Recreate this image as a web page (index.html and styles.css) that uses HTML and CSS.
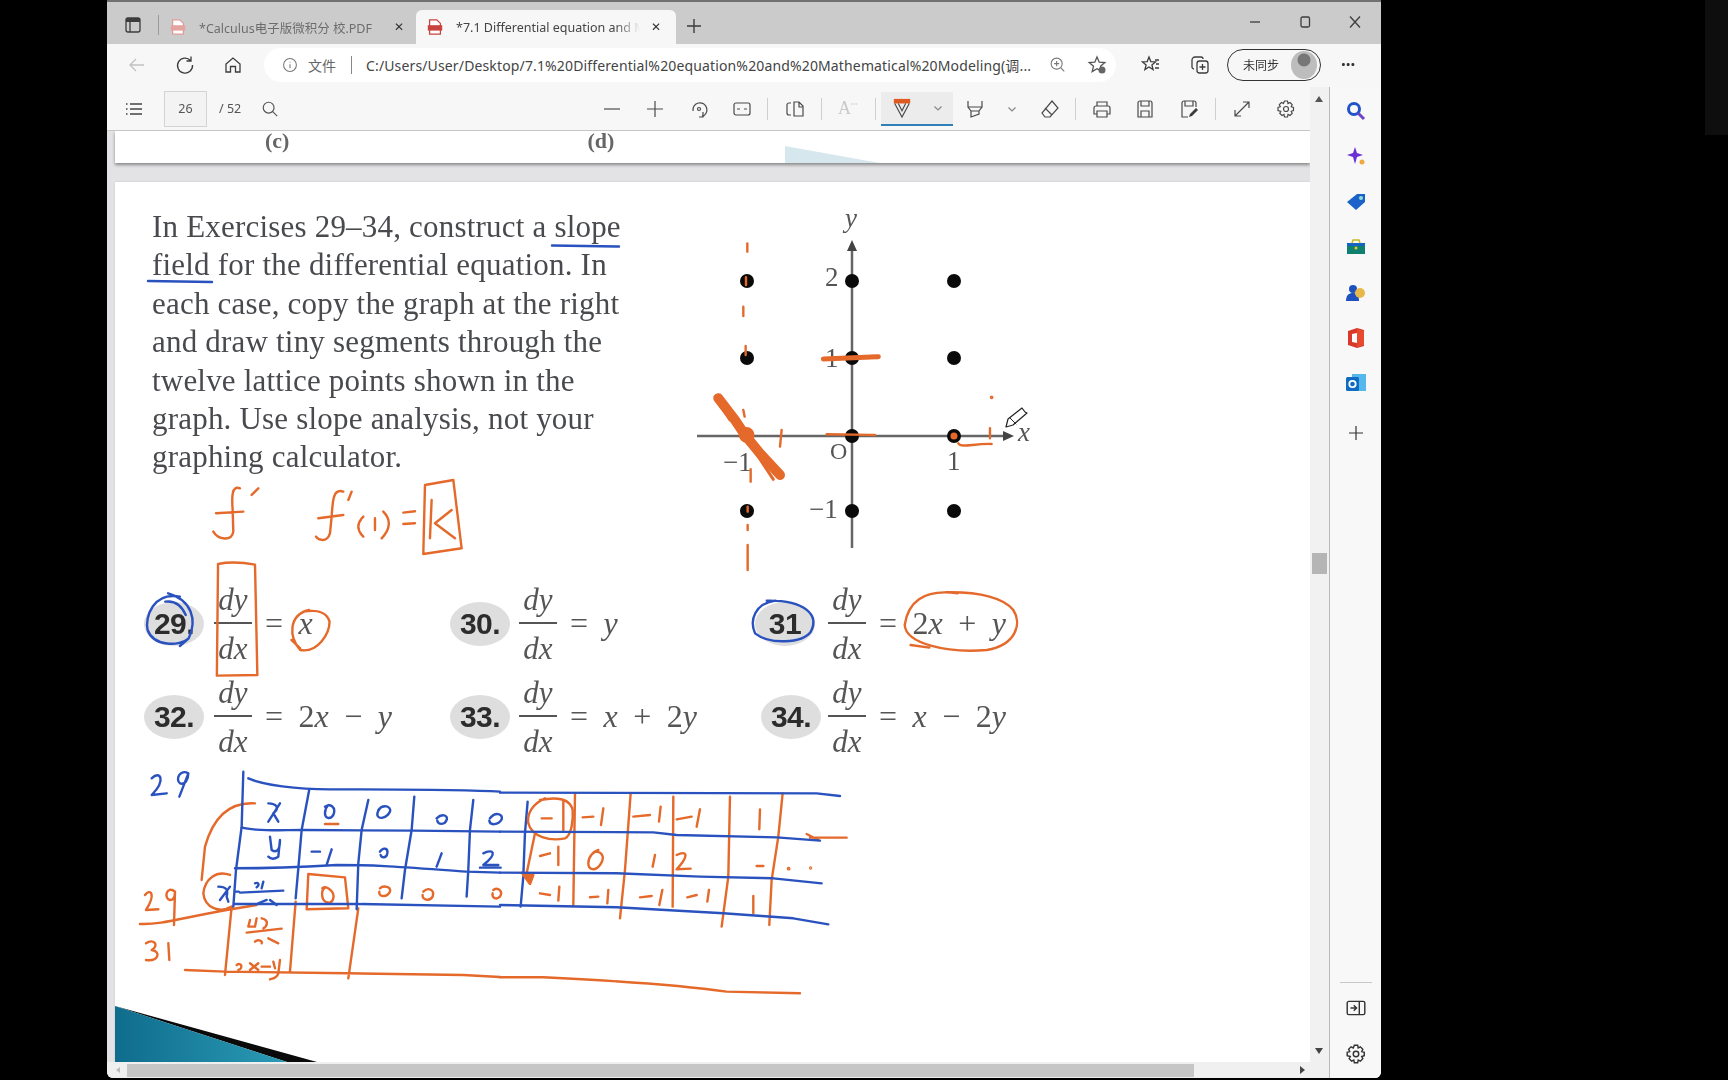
FILE: index.html
```html
<!DOCTYPE html>
<html lang="zh">
<head>
<meta charset="utf-8">
<title>7.1 Differential equation and Mathematical Modeling</title>
<link rel="stylesheet" href="styles.css">
</head>
<body>
<div class="corner"></div>
<div class="window">
  <header class="titlebar">
    <svg class="ic tabview" viewBox="0 0 20 20"><rect x="3" y="3" width="14" height="14" rx="2"/><path class="fill" d="M3 3h14v4H3z"/><path d="M7 7v10"/></svg>
    <span class="tsep"></span>
    <div class="tab">
      <svg class="pdf faded" viewBox="0 0 20 20"><path d="M4 2h8l4 4v12H4z"/><rect class="band" x="2" y="8" width="16" height="6"/></svg>
      <span class="tabtext t1">*Calculus电子版微积分 校.PDF</span>
      <span class="tabx">✕</span>
    </div>
    <div class="tab active">
      <svg class="pdf" viewBox="0 0 20 20"><path d="M4 2h8l4 4v12H4z"/><rect class="band" x="2" y="8" width="16" height="6"/></svg>
      <span class="tabtext t2">*7.1 Differential equation and M</span>
      <span class="tabx">✕</span>
    </div>
    <svg class="ic newtab" viewBox="0 0 20 20"><path d="M10 3v14M3 10h14"/></svg>
    <div class="winctl">
      <svg class="ic wbtn" viewBox="0 0 20 20"><path d="M5 10h10"/></svg>
      <svg class="ic wbtn" viewBox="0 0 20 20"><rect x="6" y="5" width="8.5" height="10" rx="1.5"/></svg>
      <svg class="ic wbtn" viewBox="0 0 20 20"><path d="M5 4.5l10 11M15 4.5l-10 11"/></svg>
    </div>
  </header>

  <nav class="addrbar">
    <svg class="ic nav dim" viewBox="0 0 20 20"><path d="M17 10H3M9 4l-6 6 6 6"/></svg>
    <svg class="ic nav" viewBox="0 0 20 20"><path d="M15.5 5.5A7.5 7.5 0 1 0 17.5 10M16 1.5v4.5h-4.5"/></svg>
    <svg class="ic nav" viewBox="0 0 20 20"><path d="M3 9l7-6 7 6v8h-4.5v-5.5h-5V17H3z"/></svg>
    <div class="omnibox">
      <svg class="ic info" viewBox="0 0 20 20"><circle cx="10" cy="10" r="8"/><path d="M10 9v5M10 6v1"/></svg>
      <span class="filelabel">文件</span>
      <span class="omsep"></span>
      <span class="url">C:/Users/User/Desktop/7.1%20Differential%20equation%20and%20Mathematical%20Modeling(调...</span>
      <svg class="ic zoomi" viewBox="0 0 20 20"><circle cx="9" cy="9" r="6.5"/><path d="M14 14l4 4M6 9h6M9 6v6"/></svg>
      <svg class="ic fav" viewBox="0 0 20 20"><path d="M10 2l2.2 5.2 5.6.4-4.3 3.6 1.3 5.4L10 13.7 5.2 16.6l1.3-5.4L2.200 7.600l5.600-.4z"/><circle class="fill" cx="15" cy="15" r="3.500"/></svg>
    </div>
    <svg class="ic favs" viewBox="0 0 20 20"><path d="M8 2l1.800 4.600 4.700.3-3.600 3 1.200 4.600L8 12l-4.100 2.500 1.200-4.600-3.600-3 4.700-.3zM14 5h4M15 9h3M14 13h4"/></svg>
    <svg class="ic coll" viewBox="0 0 20 20"><rect x="7" y="6" width="11" height="12" rx="2.500"/><path d="M4 14a2 2 0 0 1-2-2V5a3 3 0 0 1 3-3h6a2 2 0 0 1 2 2M12.500 9v6M9.500 12h6"/></svg>
    <div class="sync"><span class="synctext">未同步</span><span class="avatar"></span></div>
    <span class="more">···</span>
  </nav>

  <div class="viewer">
    <div class="docarea">
      <div class="toolbar">
        <svg class="ic list" viewBox="0 0 20 20"><path d="M6 5h12M6 10h12M6 15h12M2 5h1.500M2 10h1.500M2 15h1.500"/></svg>
        <span class="pagebox">26</span>
        <span class="pagetotal">/ 52</span>
        <svg class="ic find" viewBox="0 0 20 20"><circle cx="8.500" cy="8.500" r="6"/><path d="M13 13l5 5"/></svg>
        <div class="tools">
          <span class="t w43"><svg class="ic" viewBox="0 0 20 20"><path d="M2 10h16"/></svg></span>
          <span class="t w43"><svg class="ic" viewBox="0 0 20 20"><path d="M2 10h16M10 2v16"/></svg></span>
          <span class="t w43"><svg class="ic" viewBox="0 0 20 20"><path d="M4 12a7 7 0 1 1 9 5.500M14 13v5h-4"/><circle cx="10" cy="10" r="1.500"/></svg></span>
          <span class="t w43"><svg class="ic" viewBox="0 0 20 20"><rect x="2" y="4" width="16" height="12" rx="2"/><path d="M5 10h3M12 10h3"/></svg></span>
          <span class="vsep s-a"></span>
          <span class="t w48"><svg class="ic" viewBox="0 0 20 20"><path d="M6 4H4a2 2 0 0 0-2 2v8a2 2 0 0 0 2 2h2M9 3v14h9V7l-4-4zM14 3v5h4"/></svg></span>
          <span class="vsep s-b"></span>
          <span class="t w48 faint"><span class="readaloud">A<sup>ꟷ</sup></span></span>
          <span class="vsep s-c"></span>
          <span class="drawbtn">
            <svg class="drawicon" viewBox="0 0 22 24"><path class="orange" d="M2 2h18v5H2z"/><path d="M3 7l8 15 8-15M7 7l4 8 4-8"/></svg>
            <svg class="chev" viewBox="0 0 12 12"><path d="M2.500 4.500L6 8l3.500-3.500"/></svg>
          </span>
          <span class="t w44"><svg class="ic" viewBox="0 0 20 20"><path d="M3 2v6l3 4h8l3-4V2M3 8h14M6 12v6l8-3v-3"/></svg></span>
          <span class="t w30"><svg class="chev" viewBox="0 0 12 12"><path d="M2.500 4.500L6 8l3.500-3.500"/></svg></span>
          <span class="t w46"><svg class="ic" viewBox="0 0 20 20"><path d="M12 2l6 7-8 9H5l-3-4zM5 9l7 7"/></svg></span>
          <span class="vsep s-d"></span>
          <span class="t w48"><svg class="ic" viewBox="0 0 20 20"><path d="M5 7V3h10v4M5 15H2V9a2 2 0 0 1 2-2h12a2 2 0 0 1 2 2v6h-3M5 12h10v6H5z"/></svg></span>
          <span class="t w38"><svg class="ic" viewBox="0 0 20 20"><path d="M3 4a2 2 0 0 1 2-2h10a2 2 0 0 1 2 2v14H3zM6 2v5h8V2M6 18v-6h8v6"/></svg></span>
          <span class="t w50"><svg class="ic" viewBox="0 0 20 20"><path d="M9 18H3V4a2 2 0 0 1 2-2h10a2 2 0 0 1 2 2v4M6 2v5h8V2"/><path class="fill" d="M10 18l1-3 6-6 2 2-6 6z"/></svg></span>
          <span class="vsep s-e"></span>
          <span class="t w50"><svg class="ic" viewBox="0 0 20 20"><path d="M3 17L17 3M11 3h6v6M3 11v6h6"/></svg></span>
          <span class="t w38"><svg class="ic" viewBox="0 0 20 20"><path d="M8.500 2h3l.5 2.500 2-1 2.200 2.200-1 2 2.300.8v3l-2.300.8 1 2-2.200 2.200-2-1-.5 2.500h-3l-.5-2.500-2 1-2.200-2.200 1-2L2 11.500v-3l2.300-.8-1-2L5.500 3.500l2 1z"/><circle cx="10" cy="10" r="2.500"/></svg></span>
        </div>
      </div>

      <div class="pages">
        <section class="page prev">
          <span class="cap cap-c">(c)</span>
          <span class="cap cap-d">(d)</span>
          <span class="prevshape"></span>
        </section>
        <section class="page current">
          <div class="intro">
            <p class="prose">In Exercises 29–34, construct a slope field for the differential equation. In each case, copy the graph at the right and draw tiny segments through the twelve lattice points shown in the graph. Use slope analysis, not your graphing calculator.</p>
            <svg class="graph" viewBox="680 200 360 370">
              <g class="axes">
                <path d="M852 548V248M697 436H1004"/>
                <path class="arrow" d="M852 240l-5 11h10zM1014 436l-11-5v10z"/>
              </g>
              <g class="dots">
                <circle cx="747" cy="281" r="7"/><circle cx="852" cy="281" r="7"/><circle cx="954" cy="281" r="7"/>
                <circle cx="747" cy="358" r="7"/><circle cx="852" cy="358" r="7"/><circle cx="954" cy="358" r="7"/>
                <circle cx="852" cy="436" r="7"/><circle cx="954" cy="436" r="7"/>
                <circle cx="747" cy="511" r="7"/><circle cx="852" cy="511" r="7"/><circle cx="954" cy="511" r="7"/>
              </g>
              <text class="glabel it" x="845" y="227">y</text>
              <text class="glabel" x="825" y="286">2</text>
              <text class="glabel" x="825" y="367">1</text>
              <text class="glabel small" x="830" y="459">O</text>
              <text class="glabel" x="947" y="470">1</text>
              <text class="glabel" x="723" y="471">−1</text>
              <text class="glabel" x="809" y="518">−1</text>
              <text class="glabel it" x="1018" y="441">x</text>
            </svg>
          </div>

          <div class="exercises">
            <div class="ex c1"><span class="num">29.</span><span class="frac"><span class="top">dy</span><span class="bot">dx</span></span><span class="rhs">= <i>x</i></span></div>
            <div class="ex c2"><span class="num">30.</span><span class="frac"><span class="top">dy</span><span class="bot">dx</span></span><span class="rhs">= <i>y</i></span></div>
            <div class="ex c3"><span class="num">31</span><span class="frac"><span class="top">dy</span><span class="bot">dx</span></span><span class="rhs">= 2<i>x</i> + <i>y</i></span></div>
            <div class="ex c1"><span class="num">32.</span><span class="frac"><span class="top">dy</span><span class="bot">dx</span></span><span class="rhs">= 2<i>x</i> − <i>y</i></span></div>
            <div class="ex c2"><span class="num">33.</span><span class="frac"><span class="top">dy</span><span class="bot">dx</span></span><span class="rhs">= <i>x</i> + 2<i>y</i></span></div>
            <div class="ex c3 shifted"><span class="num">34.</span><span class="frac"><span class="top">dy</span><span class="bot">dx</span></span><span class="rhs">= <i>x</i> − 2<i>y</i></span></div>
          </div>

          <svg class="corner-art" viewBox="0 0 202 56" preserveAspectRatio="none">
            <defs><linearGradient id="teal" x1="0" x2="1" y1="0" y2="0"><stop offset="0" stop-color="#0f6c8c"/><stop offset="1" stop-color="#2a9bb6"/></linearGradient></defs>
            <path d="M0 0L202 56H172Z" fill="#0a0a0a"/>
            <path d="M0 0L172 56H0Z" fill="url(#teal)"/>
          </svg>
        </section>

        <svg class="ink" viewBox="107 131 1204 931">
          <g class="blue">
            <path d="M552 245.500L619 246.500M148 281L212 282"/>
          </g>
          <g class="orange" transform="translate(130 190) scale(.3333)">
            <path d="M330 895C305 885 305 920 308 960L310 1025C305 1055 265 1050 250 1025M258 970L340 965M385 895L365 915"/>
            <path d="M640 905C610 895 608 930 605 980L600 1030C590 1060 565 1050 558 1040M565 985L640 975M665 905L655 930"/>
            <path d="M700 980C680 1000 680 1020 700 1040M735 985L735 1020M760 965C785 990 780 1020 755 1045M820 968L855 964M820 1002L855 1000"/>
            <path d="M885 885L970 870L995 1075L880 1092Z M905 930L900 1045M965 960L915 1000L975 1045"/>
          </g>
          <g class="orange" transform="translate(680 190) scale(.3333)">
            <path d="M202 160V185M190 350V378M198 262V285M197 468V495M203 950V965M203 1005V1020M203 1065V1140M212 838V875M190 660L194 680M305 720L300 770M930 715V745"/>
            <path d="M835 760C845 775 880 760 935 762M440 733L585 735"/>
            <path class="thick" d="M115 625L165 690L195 735L240 790L300 855"/>
            <path class="thick-edge" d="M105 620L150 690M225 785L280 868"/>
            <path class="thick2" d="M430 507L595 500"/>
            <circle class="fill" cx="822" cy="738" r="7"/>
            <circle class="fill" cx="200" cy="735" r="20"/>
            <circle class="fill" cx="935" cy="622" r="2"/>
          </g>
          <g transform="translate(130 560) scale(.5869 .3333)">
            <g class="blue">
              <path d="M85 110C40 95 25 170 30 210C40 260 85 260 100 235C115 180 105 120 65 100M60 125C80 120 90 145 95 165M100 235L85 258"/>
              <path d="M1100 122C1065 130 1055 180 1065 220C1090 255 1145 250 1160 215C1175 165 1150 120 1085 122"/>
            </g>
            <g class="orange">
              <path d="M150 12C170 5 195 8 213 14L217 345L148 347Z"/>
              <path d="M305 150C270 165 270 230 290 270C320 280 340 220 340 185C335 155 320 148 295 155M275 240L290 265"/>
              <path d="M1410 100C1350 85 1325 130 1320 195C1322 250 1390 280 1460 270C1510 255 1520 190 1505 150C1490 115 1450 95 1390 97M1330 255L1362 263"/>
            </g>
          </g>
          <g class="orange" transform="translate(130 750) scale(.3333)">
            <path d="M375 160C300 155 250 200 225 290L215 390M300 375C260 360 225 385 220 430C225 475 270 490 305 470M30 522C90 525 150 505 290 480L380 465"/>
            <path d="M305 470L285 675M497 455L480 665M685 475L655 685M165 660L285 665L650 670L1000 675L1110 681"/>
            <path d="M45 435C60 415 80 430 48 480L85 478M135 425C110 405 100 445 120 450C135 450 135 430 135 425L132 525"/>
            <path d="M48 580C70 565 90 585 65 600C95 605 85 635 48 630M115 580L118 630"/>
            <path d="M360 510L355 530L375 530L380 505M395 505C420 510 410 530 400 535M350 548L455 536M375 575C385 565 400 575 395 580M415 565L445 580"/>
            <path d="M320 645C335 635 340 655 325 660M360 640L385 660M385 640L360 660M395 650H420M430 635L435 655M450 630L445 670C440 685 430 685 420 688"/>
            <path d="M535 372L645 382L655 475L530 478L535 372M577 415C590 405 615 425 610 445C605 465 580 460 577 440C575 425 577 420 585 412"/>
            <path d="M750 415C760 405 785 410 780 425C770 445 745 440 748 425M880 425C895 410 915 420 908 440C900 455 875 450 878 435M1090 420C1105 410 1120 425 1110 440C1100 450 1085 445 1088 430"/>
            <path d="M585 222H625"/>
          </g>
          <g class="blue" transform="translate(130 750) scale(.3333)">
            <path d="M340 65L335 230L318 360L310 470"/>
            <path d="M355 85C400 105 500 118 600 118C800 118 1000 118 1110 125"/>
            <path d="M335 232C380 245 450 240 520 240L850 242L1110 245"/>
            <path d="M315 355C400 355 500 352 620 345C750 345 800 350 1010 365L1110 368"/>
            <path d="M315 462L680 462L1110 470"/>
            <path d="M538 118L515 240L505 355L497 445M715 150L695 240L685 340L680 478M853 140L845 240L825 360L815 445M1030 150L1020 240L1015 360L1010 440M1193 155L1185 250L1180 380L1172 470"/>
            <path d="M65 85C90 60 110 90 65 135L110 130M175 70C150 55 135 90 150 100C165 105 175 90 175 70L148 140"/>
            <path d="M415 160C440 160 450 175 430 190L445 215M450 160L415 215"/>
            <path d="M420 260L425 300C440 310 450 300 450 270L445 320C430 330 420 325 415 320"/>
            <path d="M585 170C600 160 620 170 610 195C600 210 585 205 585 190C585 180 590 170 595 165M745 180C760 160 785 170 780 185C770 205 745 210 742 195C742 185 745 180 750 175M920 205C935 190 955 195 950 210C945 225 925 225 922 212M1080 205C1095 185 1120 190 1115 208C1105 225 1080 228 1078 212"/>
            <path d="M545 305H570M605 298L590 345M750 305C760 290 775 295 772 310C770 325 755 325 752 315M935 310L920 350"/>
            <path d="M1060 310C1090 295 1105 310 1060 345L1105 345M1050 353H1112"/>
            <path d="M265 410C290 410 295 420 290 440L295 455M300 410L270 450M318 425H326M330 428L460 422M375 400C385 395 390 405 380 412M400 395L395 415M385 460L410 450M420 450L440 465"/>
          </g>
          <g class="orange" transform="translate(500 770) scale(.3333)">
            <path d="M135 85C100 100 80 130 85 160C95 200 150 215 195 205C215 195 220 150 218 120C210 85 170 80 120 90M190 95V180M125 145H155"/>
            <path d="M105 190L80 310"/>
            <path class="fill" d="M65 308L100 315L90 342Z"/>
            <path d="M225 70L220 405M392 70L375 300L360 445M520 80L518 410M690 80L685 320L665 470M848 70L835 200L815 330L808 465"/>
            <path d="M248 142L280 140M310 115L303 165M400 140L450 135M482 110L477 155M530 148L575 140M600 118L590 170M780 118L778 178"/>
            <path d="M120 258L150 250M175 230V285M285 245C310 245 315 265 300 285C285 305 265 300 265 280C265 260 280 245 295 240M465 255L458 290M530 255C560 240 570 255 530 298L572 296M770 288H790"/>
            <path d="M120 370L150 375M178 350L175 392M270 382L295 380M325 360L322 400M420 382L455 378M487 360L478 405M562 382L590 375M627 360L622 395M760 378V430"/>
            <path d="M920 192L955 210M930 203H1040M0 622H130C300 630 500 640 680 665L900 670"/>
            <circle class="fill" cx="866" cy="296" r="2"/>
            <circle class="fill" cx="932" cy="294" r="1.500"/>
          </g>
          <g class="blue" transform="translate(500 770) scale(.3333)">
            <path d="M0 68L950 70L1020 78M0 185L460 187L530 195L830 202L960 212M0 308L350 310L600 320L820 325L965 340M0 405L350 412L670 430L880 445L985 463"/>
          </g>
          <path class="cursor" d="M1006 427L1008 419L1022 408L1025 412L1027 413L1013 425Z"/>
          <path class="cursor-line" d="M1010 418L1016 424"/>
        </svg>
      </div>
    </div>

    <div class="vscroll">
      <span class="arrow-up"></span>
      <span class="vthumb"></span>
      <span class="arrow-down"></span>
    </div>
    <div class="hscroll">
      <span class="hleft"></span>
      <span class="hthumb"></span>
      <span class="hright"></span>
    </div>
  </div>

  <aside class="sidebar">
    <svg class="side" viewBox="0 0 22 22"><circle cx="9" cy="9" r="5.500" fill="none" stroke="#2353c8" stroke-width="3"/><path d="M13 13l6 6" stroke="#6b46c8" stroke-width="3" fill="none"/></svg>
    <svg class="side" viewBox="0 0 22 22"><path d="M10 2l2 6 6 2-6 2-2 7-2-7-6-2 6-2z" fill="#6a2fd6"/><circle cx="17" cy="17" r="2.500" fill="#f0a840"/></svg>
    <svg class="side" viewBox="0 0 22 22"><path d="M2 11L12 3h8v8l-9 8z" fill="#1b63c9"/><circle cx="16" cy="7" r="2" fill="#8fe0d0"/></svg>
    <svg class="side" viewBox="0 0 22 22"><rect x="2" y="7" width="18" height="11" fill="#0f7f6e"/><path d="M2 7h18v3H2z" fill="#1464c0"/><path d="M7 7l1-3h6l1 3" fill="none" stroke="#c8b820" stroke-width="1.500"/><circle cx="11" cy="12" r="1.500" fill="#e8c830"/></svg>
    <svg class="side" viewBox="0 0 22 22"><circle cx="8" cy="7" r="4" fill="#1e50c0"/><path d="M1 19c0-6 3-8 7-8s6 2 6 8z" fill="#1e50c0"/><circle cx="15" cy="11" r="5" fill="#e8b94a"/></svg>
    <svg class="side" viewBox="0 0 22 22"><path d="M3 4l9-3 7 2v16l-7 2-9-3z" fill="#d8392b"/><path d="M7 7l5-1v10l-5-1z" fill="#fff"/><path d="M12 2v18l7-2V4z" fill="#e84a2f"/></svg>
    <svg class="side" viewBox="0 0 22 22"><rect x="7" y="2" width="14" height="17" fill="#55b8ec"/><rect x="1" y="5" width="13" height="14" rx="1.500" fill="#0f6cc0"/><circle cx="7.500" cy="12" r="3.200" fill="none" stroke="#fff" stroke-width="1.800"/></svg>
    <svg class="side plus" viewBox="0 0 22 22"><path d="M11 4v14M4 11h14" stroke="#333" stroke-width="1.200" fill="none"/></svg>
    <div class="sidefoot">
      <span class="sidesep"></span>
      <svg class="ic sideic" viewBox="0 0 20 20"><rect x="2" y="4" width="16" height="12" rx="1.500"/><path d="M13 4v12M5 10h5M8 7.500l2.500 2.500L8 12.500"/></svg>
      <svg class="ic sideic gearic" viewBox="0 0 20 20"><path d="M8.500 2h3l.5 2.500 2-1 2.200 2.200-1 2 2.300.8v3l-2.300.8 1 2-2.200 2.200-2-1-.5 2.500h-3l-.5-2.500-2 1-2.200-2.200 1-2L2 11.500v-3l2.300-.8-1-2L5.500 3.500l2 1z"/><circle cx="10" cy="10" r="2.500"/></svg>
    </div>
  </aside>
</div>
</body>
</html>
```
FILE: styles.css
```css
* { box-sizing: border-box; }
html, body { margin: 0; height: 100%; }
body { background: #000; overflow: hidden; font-family: "Noto Sans", "Noto Sans CJK SC", sans-serif; color: #333; }
.corner { position: absolute; top: 0; right: 0; width: 23px; height: 135px; background: #0e0e0e; }

.window {
  position: relative;
  margin-left: 107px; width: 1274px; height: 1078px;
  display: grid;
  grid-template-columns: 1fr 51px;
  grid-template-rows: 44px 43px 1fr;
  grid-template-areas: "title title" "addr addr" "viewer side";
  background: #f7f7f7;
  border-radius: 0 0 6px 6px;
  overflow: hidden;
  filter: blur(.55px);
}
.ic { width: 20px; height: 20px; flex: none; fill: none; stroke: #3c3c3c; stroke-width: 1.3; }
.ic .fill { fill: #3c3c3c; stroke: none; }

/* title bar */
.titlebar { grid-area: title; display: flex; align-items: flex-end; background: #cbcbcb; border-top: 2px solid #707070; padding-left: 16px; position: relative; }
.tabview { align-self: center; margin-top: 3px; }
.tsep { align-self: center; width: 1px; height: 20px; background: #9a9a9a; margin: 3px 4px 0 15px; }
.tab { display: flex; align-items: center; width: 253px; height: 34px; padding-left: 6px; font-size: 12.5px; color: #555; }
.tab.active { width: 260px; padding-left: 10px; background: #f7f7f7; border-radius: 6px 6px 0 0; color: #444; }
.pdf { width: 18px; height: 20px; flex: none; fill: #fff; stroke: #c9433e; stroke-width: 1.4; }
.pdf .band { fill: #c9433e; stroke: none; }
.pdf.faded { stroke: #dd9a98; }
.pdf.faded .band { fill: #e3a3a0; }
.tabtext { white-space: nowrap; margin-left: 12px; }
.t1 { width: 180px; opacity: .8; }
.t2 { width: 190px; flex: none; -webkit-mask-image: linear-gradient(90deg, #000 84%, transparent 97%); mask-image: linear-gradient(90deg, #000 84%, transparent 97%); }
.tabx { font-size: 12px; font-weight: 700; color: #333; margin-left: 14px; width: 16px; text-align: center; font-family: "DejaVu Sans", sans-serif; }
.t1 + .tabx { margin-left: 12px; }
.t2 + .tabx { margin-left: 2px; }
.newtab { align-self: center; margin: 5px 0 0 8px; stroke-width: 1.400; }
.winctl { margin-left: auto; display: flex; align-self: flex-start; height: 40px; align-items: center; padding-right: 1px; }
.wbtn { width: 50px; height: 20px; }

/* address bar */
.addrbar { grid-area: addr; display: flex; align-items: center; padding: 0 0 2px 6px; background: #f7f7f7; }
.nav { width: 48px; height: 20px; stroke-width: 1.300; }
.nav.dim { stroke: #c2c2c2; }
.omnibox { display: flex; align-items: center; margin-left: 7px; width: 852px; height: 34px; background: #fff; border-radius: 17px; padding-left: 18px; font-size: 14px; color: #444; }
.info { width: 16px; height: 16px; stroke: #777; }
.filelabel { margin-left: 10px; width: 31px; white-space: nowrap; font-size: 14px; color: #666; }
.omsep { width: 1px; height: 18px; background: #888; margin: 0 14px 0 12px; }
.url { white-space: nowrap; font-size: 14px; letter-spacing: .14px; width: 668px; flex: none; }
.zoomi { width: 17px; height: 17px; margin-left: 15px; stroke: #777; }
.fav { width: 20px; margin-left: 21px; stroke: #555; }
.fav .fill { fill: #666; }
.favs { margin-left: 25px; }
.coll { margin-left: 29px; }
.sync { display: flex; align-items: center; margin-left: 17px; width: 94px; height: 32px; border: 1.500px solid #333; border-radius: 16px; padding-left: 15px; font-size: 12px; color: #333; }
.synctext { width: 48px; }
.avatar { width: 26px; height: 28px; border-radius: 50%; background: radial-gradient(circle at 50% 32%, #777 0 26%, #bdbdbd 30% 100%); }
.more { margin-left: 20px; font-size: 17px; font-weight: 700; color: #333; letter-spacing: 0; }

/* viewer */
.viewer { grid-area: viewer; display: grid; grid-template-columns: 1fr 19px; grid-template-rows: 1fr 16px; border-right: 1px solid #b9b9b9; min-height: 0; min-width: 0; }
.docarea { display: flex; flex-direction: column; min-height: 0; min-width: 0; }
.toolbar { height: 44px; flex: none; display: flex; align-items: center; padding-left: 17px; padding-right: 5px; background: #f7f7f7; border-bottom: 1px solid #c6c6c6; font-size: 12.5px; color: #555; }
.list { stroke: #444; }
.pagebox { margin-left: 20px; width: 43px; height: 36px; display: flex; align-items: center; justify-content: center; background: #f3f3f3; border: 1px solid #d4d4d4; color: #555; }
.pagetotal { margin-left: 12px; }
.find { margin-left: 20px; width: 18px; height: 18px; stroke: #555; }
.tools { margin-left: auto; display: flex; align-items: center; }
.t { display: flex; justify-content: center; align-items: center; height: 34px; }
.t .ic { stroke: #4a4a4a; stroke-width: 1.200; }
.w30 { width: 30px; } .w38 { width: 38px; } .w43 { width: 43.5px; } .w44 { width: 44px; } .w46 { width: 46px; } .w48 { width: 48px; } .w50 { width: 50px; }
.vsep { width: 1px; height: 22px; background: #cfcfcf; }
.s-a { margin: 0 3px; } .s-b { margin: 0 2px; } .s-c { margin: 0 5px 0 3px; } .s-d { margin: 0 2px; } .s-e { margin: 0 1px; }
.faint { color: #c9c9c9; font-family: "Liberation Serif", serif; font-size: 18px; }
.readaloud sup { font-size: 8px; }
.drawbtn { display: flex; align-items: center; width: 72px; height: 34px; background: #ececec; border-bottom: 2px solid #2f7fb8; padding-left: 11px; }
.drawicon { width: 20px; height: 22px; fill: none; stroke: #444; stroke-width: 1.200; }
.drawicon .orange { fill: #df5a1f; stroke: none; }
.chev { width: 12px; height: 12px; fill: none; stroke: #888; stroke-width: 1.200; }
.drawbtn .chev { margin-left: 20px; }

/* pdf pages */
.pages { position: relative; flex: 1; min-height: 0; overflow: hidden; background: #e3e3e5; padding-left: 8px; font-family: "Liberation Serif", serif; }
.page { background: #fff; position: relative; }
.prev { height: 32px; box-shadow: 0 2px 3px rgba(0,0,0,.4); display: flex; margin-bottom: 19px; }
.cap { font-size: 22px; line-height: 20px; color: #666; font-weight: 700; }
.cap-c { margin-left: 150px; }
.cap-d { margin-left: 298px; }
.prevshape { position: absolute; left: 670px; top: 15px; width: 95px; height: 17px; background: #d6e7ee; clip-path: polygon(0 0, 100% 100%, 0 100%); }
.current { height: 880px; padding: 18px 0 0 37px; box-shadow: 0 0 2px rgba(0,0,0,.12); }
.intro { display: flex; height: 370px; }
.prose { margin: 8px 0 0; width: 480px; font-size: 31px; letter-spacing: .2px; line-height: 38.400px; color: #484a4e; flex: none; }
.graph { width: 360px; height: 370px; flex: none; margin-left: 48px; font-family: "Liberation Serif", serif; }
.axes path { fill: none; stroke: #666; stroke-width: 2.500; }
.axes .arrow { fill: #444; stroke: none; }
.dots circle { fill: #0a0a0a; }
.glabel { font-size: 27px; fill: #555; }
.glabel.small { font-size: 24px; }
.glabel.it { font-style: italic; }

.exercises { margin-top: 7px; display: grid; grid-template-columns: 302px 305px 1fr; grid-auto-rows: 93px; margin-left: -4px; }
.ex { display: flex; align-items: center; font-size: 31px; color: #555; }
.num { width: 60px; height: 44px; display: flex; align-items: center; justify-content: center; background: #dedede; border-radius: 50% / 50%; font-family: "Liberation Sans", sans-serif; font-weight: 700; font-size: 30px; letter-spacing: -.5px; color: #2c2c2c; flex: none; margin-right: 10px; }
.c1 .num { margin-left: -4px; }
.c2 .num { margin-right: 9px; }
.c3 .num { margin-right: 13px; }
.shifted .num { margin-left: 6px; margin-right: 7px; }
.frac { display: flex; flex-direction: column; width: 38px; font-style: italic; text-align: center; flex: none; }
.top { height: 47px; line-height: 46px; border-bottom: 2px solid #555; }
.bot { height: 46px; line-height: 50px; }
.rhs { margin-left: 13px; word-spacing: 7.500px; white-space: nowrap; font-size: 32px; }
.corner-art { position: absolute; left: 0; bottom: 0; width: 202px; height: 56px; }

/* handwriting */
.ink { position: absolute; left: 0; top: 0; width: 1204px; height: 931px; pointer-events: none; }
.ink path, .ink circle { vector-effect: non-scaling-stroke; fill: none; stroke-width: 2.400; stroke-linecap: round; stroke-linejoin: round; }
.ink .orange path, .ink .orange circle { stroke: #e4692a; }
.ink .blue path { stroke: #2a52bf; }
.ink .orange .fill { fill: #e4692a; stroke: #e4692a; }
.ink .orange .thick { stroke-width: 10; }
.ink .orange .thick-edge { stroke-width: 3; }
.ink .orange .thick2 { stroke-width: 5; }
.cursor { fill: #fff !important; stroke: #222; stroke-width: 1.200 !important; }
.cursor-line { stroke: #222; stroke-width: 1 !important; }

/* scrollbars */
.vscroll { position: relative; background: #f1f1f1; grid-row: 1; grid-column: 2; }
.arrow-up { position: absolute; top: 9px; left: 5px; border: 4.500px solid transparent; border-top: 0; border-bottom: 6px solid #555; }
.arrow-down { position: absolute; bottom: 8px; left: 5px; border: 4.500px solid transparent; border-bottom: 0; border-top: 6px solid #444; }
.vthumb { position: absolute; top: 466px; left: 2px; width: 15px; height: 21px; background: #b5b5b5; }
.hscroll { grid-row: 2; grid-column: 1 / 3; display: flex; align-items: center; background: #f0f0f0; position: relative; padding-left: 20px; }
.hthumb { width: 1067px; height: 13px; background: #c6c6c6; }
.hleft { position: absolute; left: 6px; border: 3px solid transparent; border-right: 4px solid #bbb; }
.hright { position: absolute; left: 1193px; border: 4px solid transparent; border-right: 0; border-left: 5px solid #444; }

/* sidebar */
.sidebar { grid-area: side; display: flex; flex-direction: column; align-items: center; background: #f8f8f8; padding-top: 13px; }
.side { width: 22px; height: 22px; flex: none; margin-bottom: 23.400px; }
.plus { margin-top: 4px; }
.sidefoot { margin-top: auto; display: flex; flex-direction: column; align-items: center; padding-bottom: 13px; }
.sidesep { width: 32px; height: 1px; background: #c8c8c8; margin-bottom: 14px; }
.sideic { stroke: #333; width: 22px; height: 22px; }
.gearic { margin-top: 24px; }
```
